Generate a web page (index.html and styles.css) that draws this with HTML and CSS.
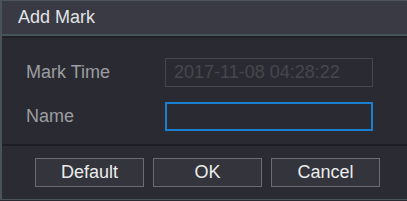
FILE: index.html
```html
<!DOCTYPE html>
<html lang="en">
<head>
  <meta charset="UTF-8" />
  <meta name="viewport" content="width=device-width, initial-scale=1.0" />
  <title>Add Mark</title>

  <link rel="stylesheet" href="styles.css">
</head>

<body>
  <div class="dialog">
    <!-- Title bar -->
    <div class="dialog-title">Add Mark</div>

    <!-- Form -->
    <div class="dialog-body">
      <div class="row">
        <label class="label" for="markTime">Mark Time</label>
        <input type="text" id="markTime" class="field field-disabled" value="2017-11-08 04:28:22" disabled>
      </div>
      <div class="row">
        <label class="label" for="markName">Name</label>
        <input type="text" id="markName" class="field field-active">
      </div>
    </div>

    <!-- Buttons -->
    <div class="dialog-footer">
      <button class="btn">Default</button>
      <button class="btn">OK</button>
      <button class="btn">Cancel</button>
    </div>
  </div>
</body>
</html>
```

FILE: styles.css
```css
body {
  margin: 0;
  background: #2a2b32;
  font-family: 'Liberation Sans', Arial, sans-serif;
}

.dialog {
  width: 407px;
  height: 200px;
  box-sizing: border-box;
  border-top: 1px solid #4e545c;
  border-left: 2px solid #4a535c;
  border-bottom: 1px solid #4a535c;
  background: #2a2b32;
  display: flex;
  flex-direction: column;
}

.dialog-title {
  height: 33px;
  line-height: 32px;
  padding-left: 16px;
  background: #393a44;
  color: #e2e2e4;
  font-size: 18px;
  border-bottom: 2px solid #47535a;
}

.dialog-body {
  border-top: 2px solid #212228;
  padding: 20px 0 13px 24px;
  display: flex;
  flex-direction: column;
  gap: 15px;
}

.row {
  display: flex;
  align-items: center;
}

.label {
  width: 139px;
  color: #9c9da1;
  font-size: 18px;
}

.field {
  width: 208px;
  height: 29px;
  box-sizing: border-box;
  padding: 0 8px;
  font-family: inherit;
  font-size: 18px;
  background: #2a2b32;
  outline: none;
  margin: 0;
}

.field-disabled {
  border: 1px solid #46474e;
  color: #46474c;
}

.field-active {
  border: 2px solid #1a7fcf;
  color: #e0e0e0;
}

.dialog-footer {
  flex: 1;
  border-top: 2px solid #1d1e23;
  display: flex;
  align-items: center;
  gap: 9px;
  padding-left: 33px;
  background: #2b2c33;
}

.btn {
  width: 109px;
  height: 29px;
  box-sizing: border-box;
  border: 1px solid #6a6c72;
  background: #33343c;
  color: #ececec;
  font-family: inherit;
  font-size: 18px;
  padding: 0;
  cursor: pointer;
}

.btn:hover {
  background: #3c3d46;
}
```
